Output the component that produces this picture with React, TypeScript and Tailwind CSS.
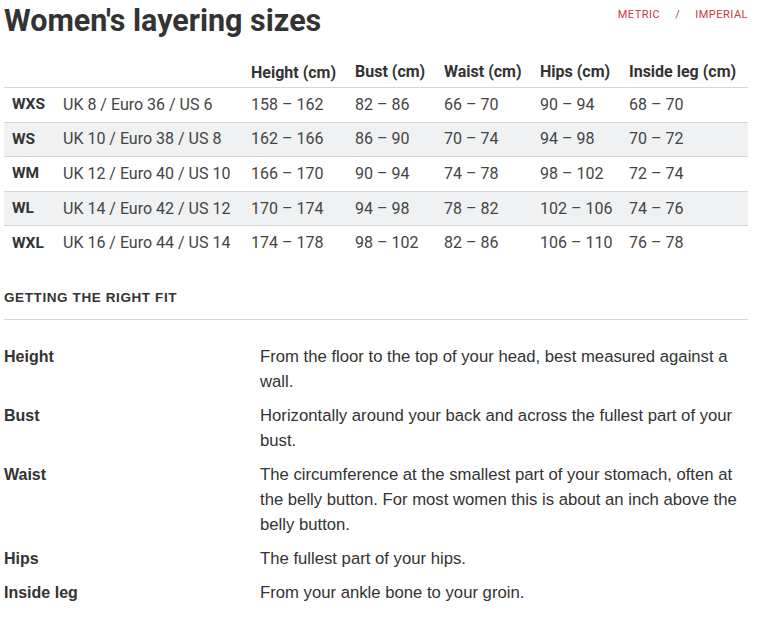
import React from "react";

const rows = [
  ["WXS", "UK 8 / Euro 36 / US 6", "158 – 162", "82 – 86", "66 – 70", "90 – 94", "68 – 70"],
  ["WS", "UK 10 / Euro 38 / US 8", "162 – 166", "86 – 90", "70 – 74", "94 – 98", "70 – 72"],
  ["WM", "UK 12 / Euro 40 / US 10", "166 – 170", "90 – 94", "74 – 78", "98 – 102", "72 – 74"],
  ["WL", "UK 14 / Euro 42 / US 12", "170 – 174", "94 – 98", "78 – 82", "102 – 106", "74 – 76"],
  ["WXL", "UK 16 / Euro 44 / US 14", "174 – 178", "98 – 102", "82 – 86", "106 – 110", "76 – 78"],
];

const fit = [
  ["Height", "From the floor to the top of your head, best measured against a wall."],
  ["Bust", "Horizontally around your back and across the fullest part of your bust."],
  [
    "Waist",
    "The circumference at the smallest part of your stomach, often at the belly button. For most women this is about an inch above the belly button.",
  ],
  ["Hips", "The fullest part of your hips."],
  ["Inside leg", "From your ankle bone to your groin."],
];

export default function App() {
  return (
    <div className="min-h-screen bg-white text-[#333] px-1 w-[752px]">
      {/* Header */}
      <div className="flex items-start justify-between">
        <h1 className="text-[30.5px] leading-[42px] font-bold font-['Roboto',sans-serif] text-[#333]">
          Women's layering sizes
        </h1>
        <div className="mt-[7px] flex gap-[15px] text-[11px] tracking-[0.5px] text-[#c9383d] font-['Roboto',sans-serif]">
          <span>METRIC</span>
          <span>/</span>
          <span>IMPERIAL</span>
        </div>
      </div>

      {/* Size table */}
      <table className="mt-[18px] w-[744px] border-collapse font-['Roboto',sans-serif] text-[16px] text-[#333]">
        <thead>
          <tr className="border-b border-[#d6d6d6] text-[16px] font-bold">
            <th className="w-[59px]"></th>
            <th className="w-[188px]"></th>
            <th className="w-[104px] text-left font-bold pb-[3px] leading-[21px]">Height (cm)</th>
            <th className="w-[89px] text-left font-bold pb-[3px]">Bust (cm)</th>
            <th className="w-[96px] text-left font-bold pb-[3px]">Waist (cm)</th>
            <th className="w-[89px] text-left font-bold pb-[3px]">Hips (cm)</th>
            <th className="text-left font-bold pb-[3px]">Inside leg (cm)</th>
          </tr>
        </thead>
        <tbody>
          {rows.map((r, i) => (
            <tr
              key={r[0]}
              className={`h-[34.6px] border-b ${i === 4 ? "border-transparent" : "border-[#d6d6d6]"} ${
                i % 2 === 1 ? "bg-[#f0f1f2]" : "bg-white"
              }`}
            >
              <td className="pl-2 font-bold text-[15.5px]">{r[0]}</td>
              {r.slice(1).map((c, j) => (
                <td key={j} className="text-[#444]">
                  {c}
                </td>
              ))}
            </tr>
          ))}
        </tbody>
      </table>

      {/* Getting the right fit */}
      <div className="mt-[27px] font-['Liberation_Sans',Arial,sans-serif]">
        <h2 className="text-[13.5px] font-bold tracking-[0.6px] text-[#333] pb-[11px] border-b border-[#d6d6d6]">
          GETTING THE RIGHT FIT
        </h2>
        <div className="mt-[24px] flex flex-col gap-[9px] leading-[25px] text-[#333]">
          {fit.map(([k, v]) => (
            <div key={k} className="flex">
              <div className="w-[256px] shrink-0 font-bold text-[16px]">{k}</div>
              <div className="w-[484px] text-[16.7px]">{v}</div>
            </div>
          ))}
        </div>
      </div>
    </div>
  );
}
